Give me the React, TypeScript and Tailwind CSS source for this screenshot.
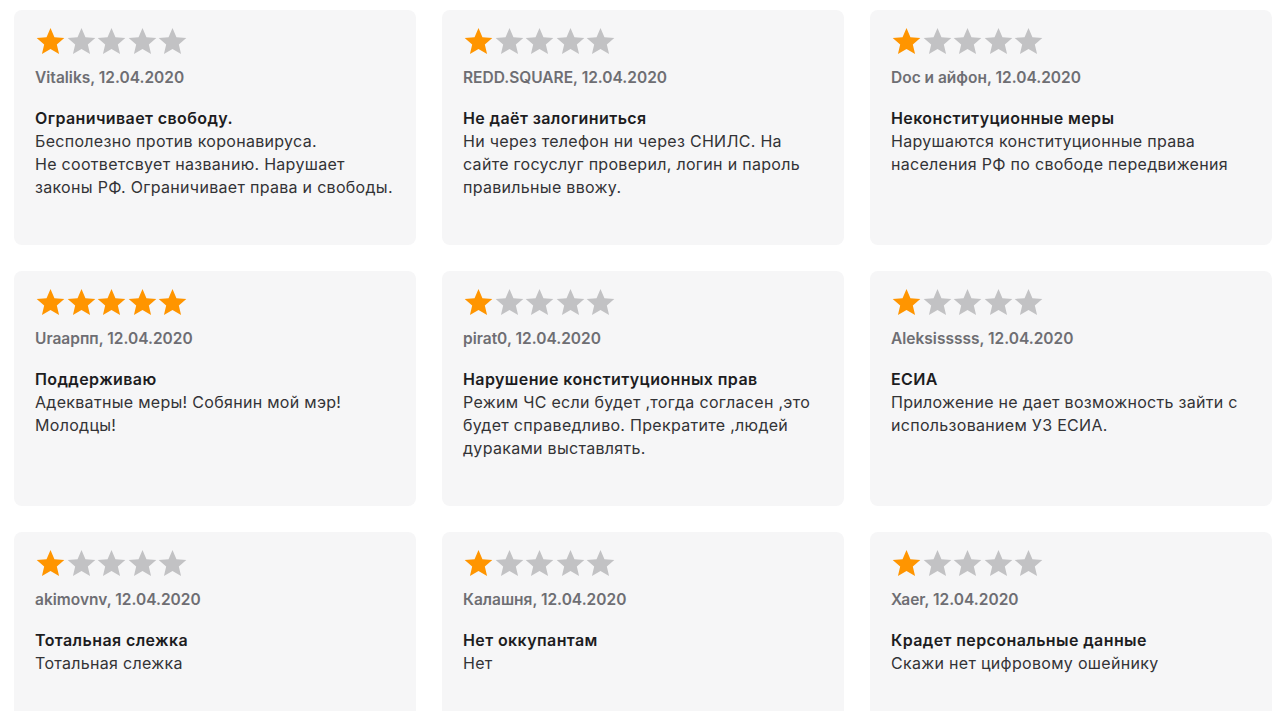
import React from 'react';

interface Review {
  author: string;
  date: string;
  rating: number;
  title: string;
  body: string[];
}

const reviews: Review[] = [
  {
    author: 'Vitaliks',
    date: '12.04.2020',
    rating: 1,
    title: 'Ограничивает свободу.',
    body: ['Бесполезно против коронавируса.', 'Не соответсвует названию. Нарушает законы РФ. Ограничивает права и свободы.'],
  },
  {
    author: 'REDD.SQUARE',
    date: '12.04.2020',
    rating: 1,
    title: 'Не даёт залогиниться',
    body: ['Ни через телефон ни через СНИЛС. На сайте госуслуг проверил, логин и пароль правильные ввожу.'],
  },
  {
    author: 'Doc и айфон',
    date: '12.04.2020',
    rating: 1,
    title: 'Неконституционные меры',
    body: ['Нарушаются конституционные права населения РФ по свободе передвижения'],
  },
  {
    author: 'Uraapпп',
    date: '12.04.2020',
    rating: 5,
    title: 'Поддерживаю',
    body: ['Адекватные меры! Собянин мой мэр! Молодцы!'],
  },
  {
    author: 'pirat0',
    date: '12.04.2020',
    rating: 1,
    title: 'Нарушение конституционных прав',
    body: ['Режим ЧС если будет ,тогда согласен ,это будет справедливо. Прекратите ,людей дураками выставлять.'],
  },
  {
    author: 'Aleksisssss',
    date: '12.04.2020',
    rating: 1,
    title: 'ЕСИА',
    body: ['Приложение не дает возможность зайти с использованием УЗ ЕСИА.'],
  },
  {
    author: 'akimovnv',
    date: '12.04.2020',
    rating: 1,
    title: 'Тотальная слежка',
    body: ['Тотальная слежка'],
  },
  {
    author: 'Калашня',
    date: '12.04.2020',
    rating: 1,
    title: 'Нет оккупантам',
    body: ['Нет'],
  },
  {
    author: 'Xaer',
    date: '12.04.2020',
    rating: 1,
    title: 'Крадет персональные данные',
    body: ['Скажи нет цифровому ошейнику'],
  },
];

const Star = ({ filled }: { filled: boolean }) => (
  <svg
    viewBox="0 0 24 24"
    className={`w-[31px] h-[31px] -mr-[0.5px] ${filled ? 'text-[#ff9500]' : 'text-[#c2c2c4]'}`}
  >
    <path
      fill="currentColor"
      d="M12 1.6l3.06 7.02 7.62.66-5.78 5.02 1.73 7.46L12 17.8l-6.63 3.96 1.73-7.46L1.32 9.28l7.62-.66L12 1.6z"
    />
  </svg>
);

const ReviewCard = ({ review }: { review: Review }) => (
  <div className="bg-[#f6f6f7] rounded-[8px] h-[235px] pl-[21px] pr-[20px] pt-[16px]">
    <div className="flex">
      {[1, 2, 3, 4, 5].map((n) => (
        <Star key={n} filled={n <= review.rating} />
      ))}
    </div>
    <div className="mt-[11px] text-[15.5px] font-semibold text-[#6e6e73] leading-[20px]">
      {review.author}, {review.date}
    </div>
    <div className="mt-[19px] text-[16px] font-semibold text-[#1d1d1f] leading-[23px] tracking-[0.4px]">
      {review.title}
    </div>
    <div className="text-[16px] text-[#333336] leading-[23px] tracking-[0.3px]">
      {review.body.map((line, i) => (
        <p key={i}>{line}</p>
      ))}
    </div>
  </div>
);

export default function App() {
  return (
    <div
      className="min-h-[711px] bg-white pl-[14px] pt-[10px]"
      style={{ fontFamily: 'Inter, "Noto Sans", sans-serif' }}
    >
      <div className="grid grid-cols-[402px_402px_402px] gap-x-[26px] gap-y-[26px]">
        {reviews.map((r, i) => (
          <ReviewCard key={i} review={r} />
        ))}
      </div>
    </div>
  );
}
